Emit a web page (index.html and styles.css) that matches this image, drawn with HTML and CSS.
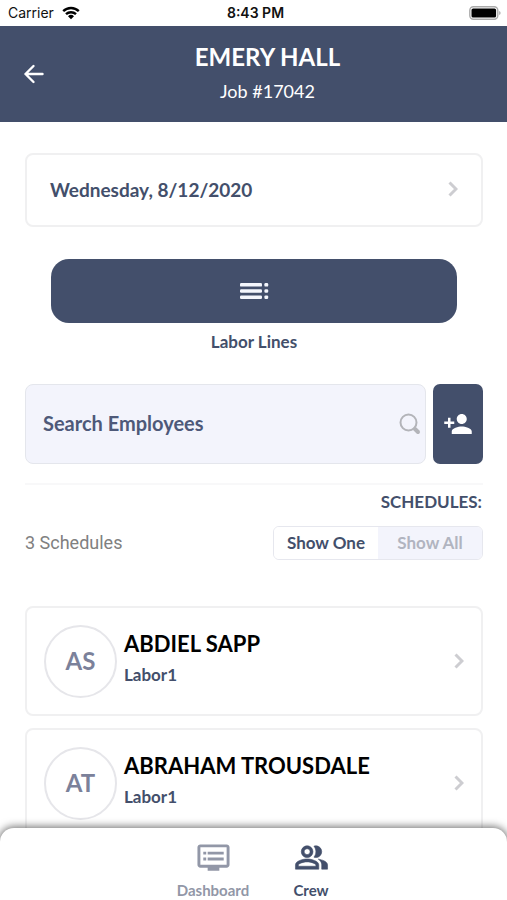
FILE: index.html
```html
<!DOCTYPE html>
<html lang="en">
<head>
<meta charset="utf-8">
<meta name="viewport" content="width=device-width, initial-scale=1">
<title>Emery Hall</title>
<link rel="stylesheet" href="styles.css">
</head>
<body>
<div class="app">
  <div class="status">
    <span class="carrier">Carrier
      <svg width="18" height="14" viewBox="0 0 18 14" aria-hidden="true"><g fill="none" stroke="#000" stroke-width="2.4"><path d="M1.2 5.2a11.2 11.2 0 0 1 15.6 0"/><path d="M4 8.2a7.2 7.2 0 0 1 10 0"/></g><path d="M9 13.2 6 10.3a4.3 4.3 0 0 1 6 0z"/></svg>
    </span>
    <time class="clock">8:43 PM</time>
    <svg class="battery" width="32" height="14" viewBox="0 0 32 14" aria-hidden="true"><rect x=".8" y=".8" width="28" height="12.4" rx="3.6" fill="#fff" stroke="#aaa" stroke-width="1.4"/><rect x="2.5" y="2.5" width="24.6" height="9" rx="1.6"/><path d="M30.3 5v4c1.6-.7 1.6-3.3 0-4z" fill="#999"/></svg>
  </div>
  <header class="header">
    <button class="back" type="button" aria-label="Back"><svg width="22" height="22" viewBox="0 0 22 22" fill="none" stroke="#fff" stroke-width="2.4" stroke-linecap="round" stroke-linejoin="round"><path d="M19.5 11H2.500M10.500 3 2.500 11l8 8"/></svg></button>
    <div class="heading">
      <h1>EMERY HALL</h1>
      <p>Job #17042</p>
    </div>
  </header>
  <main class="content">
    <button class="date card" type="button">Wednesday, 8/12/2020
      <svg class="chevron" width="10" height="16" viewBox="0 0 10 16"><path d="m1.500 1.500 6.500 6.500-6.500 6.500"/></svg>
    </button>
    <div class="labor">
      <button class="labor-button" id="labor" type="button" aria-labelledby="labor-label"><svg width="30" height="18" viewBox="0 0 30 18" fill="#f4f6fc"><rect x="1" y="1" width="22" height="3.600" rx="1.200"/><rect x="1" y="7.200" width="22" height="3.600" rx="1.200"/><rect x="1" y="13.400" width="22" height="3.600" rx="1.200"/><rect x="25.400" y="1" width="3.800" height="3.600" rx="1.200"/><rect x="25.400" y="7.200" width="3.800" height="3.600" rx="1.200"/><rect x="25.400" y="13.400" width="3.800" height="3.600" rx="1.200"/></svg></button>
      <label id="labor-label" for="labor">Labor Lines</label>
    </div>
    <div class="search-row">
      <div class="search">
        <input type="text" placeholder="Search Employees" aria-label="Search Employees">
        <svg width="22" height="22" viewBox="0 0 22 22" fill="none" stroke="#b3b4b9" stroke-linecap="round"><circle cx="9.500" cy="9.500" r="8" stroke-width="2"/><path d="m16 16 3 3" stroke-width="4"/></svg>
      </div>
      <button class="add" type="button" aria-label="Add employee"><svg width="30" height="30" viewBox="0 0 24 24" fill="#fff"><path d="M15 12c2.210 0 4-1.790 4-4s-1.790-4-4-4-4 1.790-4 4 1.790 4 4 4zm-9-2V7H4v3H1v2h3v3h2v-3h3v-2H6zm9 4c-2.670 0-8 1.340-8 4v2h16v-2c0-2.660-5.330-4-8-4z"/></svg></button>
    </div>
    <section class="schedules">
      <h2>SCHEDULES:</h2>
      <div class="filter">
        <span class="count">3 Schedules</span>
        <div class="toggle">
          <button class="on" type="button" aria-pressed="true">Show One</button>
          <button type="button" aria-pressed="false">Show All</button>
        </div>
      </div>
    </section>
    <div class="people">
      <a class="person card" href="#abdiel">
        <span class="avatar">AS</span>
        <span class="who"><strong>ABDIEL SAPP</strong><span>Labor1</span></span>
        <svg class="chevron" width="10" height="16" viewBox="0 0 10 16"><path d="m1.500 1.500 6.500 6.500-6.500 6.500"/></svg>
      </a>
      <a class="person card" href="#abraham">
        <span class="avatar">AT</span>
        <span class="who"><strong>ABRAHAM TROUSDALE</strong><span>Labor1</span></span>
        <svg class="chevron" width="10" height="16" viewBox="0 0 10 16"><path d="m1.500 1.500 6.500 6.500-6.500 6.500"/></svg>
      </a>
    </div>
  </main>
  <nav class="tabs">
    <a href="#dashboard"><svg width="35" height="35" viewBox="0 0 24 24" fill="currentColor"><path d="M21 3H3c-1.100 0-2 .9-2 2v12c0 1.100.9 2 2 2h5v2h8v-2h5c1.100 0 1.990-.9 1.990-2L23 5c0-1.100-.9-2-2-2zm0 14H3V5h18v12zm-2-9H8v2h11V8zm0 4H8v2h11v-2zM7 8H5v2h2V8zm0 4H5v2h2v-2z"/></svg><span>Dashboard</span></a>
    <a class="active" href="#crew"><svg width="35" height="35" viewBox="0 0 24 24" fill="currentColor" stroke="currentColor" stroke-width=".4"><path d="M16.670 13.130C18.040 14.060 19 15.320 19 17v3h4v-3c0-2.180-3.570-3.470-6.330-3.870zM15 12c2.210 0 4-1.790 4-4s-1.790-4-4-4c-.47 0-.91.1-1.330.24C14.500 5.270 15 6.580 15 8s-.5 2.730-1.330 3.760c.42.14.86.24 1.330.24zM9 12c2.210 0 4-1.790 4-4s-1.790-4-4-4-4 1.790-4 4 1.790 4 4 4zm0-6c1.100 0 2 .9 2 2s-.9 2-2 2-2-.9-2-2 .9-2 2-2zM9 13c-2.670 0-8 1.340-8 4v3h16v-3c0-2.660-5.330-4-8-4zm6 5H3v-.99C3.200 16.290 6.300 15 9 15s5.800 1.290 6 2v1z"/></svg><span>Crew</span></a>
  </nav>
</div>
</body>
</html>
```
FILE: styles.css
```css
* {
  box-sizing: border-box;
}

body {
  margin: 0;
  background: #fff;
  color: #434f6b;
  font-family: Lato, "Open Sans", sans-serif;
  font-weight: 700;
}

button {
  padding: 0;
  border: 0;
  background: none;
  color: inherit;
  font: inherit;
}

a {
  color: inherit;
  text-decoration: none;
}

svg {
  display: block;
  flex: none;
}

.app {
  display: flex;
  flex-direction: column;
  height: 100vh;
  overflow: hidden;
}

.status {
  display: grid;
  grid-template-columns: 1fr auto 1fr;
  align-items: center;
  flex: none;
  height: 26px;
  padding: 0 6px 0 8px;
  color: #111;
  font: 400 14px/26px Inter, sans-serif;
}

.carrier {
  display: flex;
  align-items: center;
  gap: 8px;
}

.clock {
  padding-left: 2px;
  font-weight: 600;
}

.battery {
  justify-self: end;
}

.header {
  display: grid;
  grid-template-columns: 48px 1fr 20px;
  align-items: center;
  flex: none;
  height: 96px;
  background: #434f6b;
  color: #fff;
}

.back {
  padding-left: 23px;
}

.heading {
  text-align: center;
}

.heading h1 {
  margin: 0;
  font-size: 24px;
  line-height: 34px;
}

.heading p {
  margin: 0;
  font-size: 18px;
  font-weight: 400;
  line-height: 34px;
}

.content {
  flex: 1;
  min-height: 0;
  overflow: hidden;
  padding: 31px 24px 0 25px;
}

.card {
  display: flex;
  align-items: center;
  width: 100%;
  border: 2px solid #f0f0f1;
  border-radius: 8px;
}

.chevron {
  margin-left: auto;
  fill: none;
  stroke: #cdcdd1;
  stroke-width: 3;
}

.date {
  height: 74px;
  padding: 0 23px 2px;
  font-size: 19px;
}

.labor {
  padding: 32px 26px 0;
  text-align: center;
}

.labor-button {
  display: flex;
  align-items: center;
  justify-content: center;
  width: 100%;
  height: 64px;
  border-radius: 18px;
  background: #434f6b;
}

.labor label {
  display: block;
  margin-top: 8px;
  font-size: 17px;
  line-height: 22px;
}

.search-row {
  display: flex;
  gap: 7px;
  margin-top: 31px;
}

.search {
  display: flex;
  align-items: center;
  flex: 1;
  min-width: 0;
  height: 80px;
  padding: 0 4px 0 17px;
  border: 1px solid #e4e6ec;
  border-radius: 8px;
  background: #f3f4fc;
}

.search input {
  flex: 1;
  min-width: 0;
  padding: 0 0 3px;
  border: 0;
  outline: 0;
  background: none;
  color: #4e5979;
  font: inherit;
  font-size: 20px;
}

.search input::placeholder {
  color: #4e5979;
  opacity: 1;
}

.add {
  display: flex;
  align-items: center;
  justify-content: center;
  width: 50px;
  border-radius: 7px;
  background: #434f6b;
}

.schedules {
  margin-top: 19px;
  border-top: 2px solid #f8f8f9;
}

.schedules h2 {
  margin: 6px 0 13px;
  padding-right: 1px;
  font-size: 17px;
  line-height: 22px;
  text-align: right;
}

.filter {
  display: flex;
  align-items: center;
  justify-content: space-between;
}

.count {
  color: #808080;
  font-family: Roboto, sans-serif;
  font-size: 18px;
  font-weight: 400;
  line-height: 30px;
}

.toggle {
  display: flex;
  width: 210px;
  height: 34px;
  border: 1px solid #e6e7ee;
  border-radius: 6px;
  overflow: hidden;
}

.toggle button {
  flex: 1;
  padding-bottom: 2px;
  background: #f3f4fc;
  color: #b1b4c0;
  font-size: 17px;
}

.toggle .on {
  background: #fff;
  color: #434f6b;
}

.people {
  display: flex;
  flex-direction: column;
  gap: 12px;
  margin-top: 46px;
}

.person {
  flex: none;
  height: 110px;
  padding: 0 17px;
  gap: 7px;
}

.avatar {
  display: flex;
  align-items: center;
  justify-content: center;
  flex: none;
  width: 73px;
  height: 73px;
  padding-bottom: 2px;
  border: 2px solid #e6e6ea;
  border-radius: 50%;
  color: #7b819a;
  font-size: 24px;
}

.who {
  display: flex;
  flex-direction: column;
  padding-bottom: 4px;
}

.who strong {
  color: #000;
  font-size: 22px;
  font-weight: 700;
  line-height: 32px;
}

.who span {
  font-size: 17px;
  line-height: 30px;
}

.tabs {
  display: flex;
  justify-content: center;
  gap: 24px;
  flex: none;
  height: 72px;
  padding: 12px 0 0 17px;
  border-radius: 14px 14px 0 0;
  background: #fff;
  box-shadow: 0 0 8px 1px rgba(0, 0, 0, 0.6);
  position: relative;
}

.tabs a {
  display: flex;
  flex-direction: column;
  align-items: center;
  gap: 5px;
  width: 74px;
  color: #9297a7;
  font-size: 15px;
  line-height: 20px;
}

.tabs .active {
  color: #434f6b;
}
```
